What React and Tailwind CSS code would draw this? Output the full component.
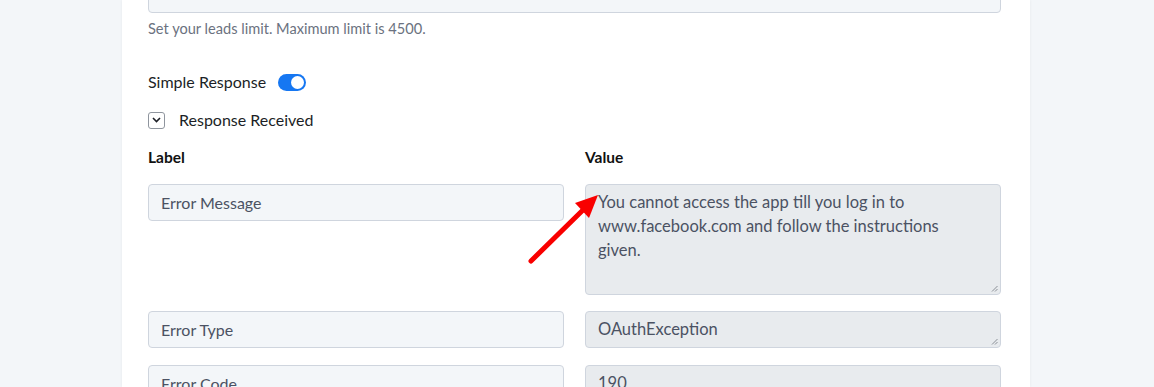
import React from "react";

const fieldCls =
  "h-[37px] w-full rounded-[4px] border border-[#cfd5de] bg-[#f3f6f9] px-[12px] text-[16px] text-[#4b5263] flex items-center";

const valueCls =
  "relative w-full rounded-[4px] border border-[#cfd5de] bg-[#e8ebee] pl-[12px] pr-[40px] text-[16.5px] leading-[24px] text-[#4b5263]";

const Grip = () => (
  <svg className="absolute right-[2px] bottom-[2px]" width="7" height="7" viewBox="0 0 7 7">
    <path d="M6.5 1 L1 6.5 M6.5 4 L4 6.5" stroke="#8a8f96" strokeWidth="1" />
  </svg>
);

const Row = ({ label, value, tall, top }) => (
  <div className="grid grid-cols-2 gap-[21px]" style={{ marginTop: top }}>
    <div className={fieldCls}>{label}</div>
    <div className={valueCls + (tall ? " h-[111px] pt-[5px]" : " h-[37px] pt-[5px]")}>
      {value}
      <Grip />
    </div>
  </div>
);

export default function App() {
  return (
    <div
      className="h-[387px] w-full overflow-hidden bg-[#f3f6f9]"
      style={{ fontFamily: "Lato, 'Open Sans', sans-serif" }}
    >
      <div className="relative ml-[122px] flow-root h-full w-[908px] bg-white pl-[26px] pr-[29px] shadow-[0_0_3px_rgba(0,0,0,0.06)]">
        <div className="-mt-[24px] h-[37px] w-full rounded-[4px] border border-[#cfd5de] bg-[#f3f6f9]" />
        <p className="mt-[8px] text-[14.6px] leading-[16px] text-[#6b7280]">
          Set your leads limit. Maximum limit is 4500.
        </p>

        <div className="mt-[35px] flex items-center gap-[12px]">
          <span className="text-[16px] leading-[20px] text-[#1c1f26]">Simple Response</span>
          <span className="flex h-[17px] w-[28px] items-center justify-end rounded-full bg-[#1677f2] pr-[2px]">
            <span className="h-[13px] w-[13px] rounded-full bg-white" />
          </span>
        </div>

        <div className="mt-[18px] flex items-center gap-[14px]">
          <span className="flex h-[17px] w-[17px] items-center justify-center rounded-[3px] border border-[#8f959e] bg-white">
            <svg width="9" height="6" viewBox="0 0 9 6">
              <path d="M1 1 L4.5 4.5 L8 1" fill="none" stroke="#1c1f26" strokeWidth="1.6" />
            </svg>
          </span>
          <span className="text-[16px] leading-[20px] text-[#1c1f26]">Response Received</span>
        </div>

        <div className="mt-[17px] grid grid-cols-2 gap-[21px] text-[15.5px] font-bold leading-[20px] text-[#111]">
          <span>Label</span>
          <span>Value</span>
        </div>

        <Row
          top="17px"
          label="Error Message"
          tall
          value="You cannot access the app till you log in to www.facebook.com and follow the instructions given."
        />
        <Row top="16px" label="Error Type" value="OAuthException" />
        <Row top="17px" label="Error Code" value="190" />

        <svg
          className="absolute left-[401px] top-[181px]"
          width="84"
          height="92"
          viewBox="0 0 84 92"
        >
          <line x1="8" y1="80" x2="61" y2="28" stroke="#f90000" strokeWidth="5" strokeLinecap="round" />
          <polygon points="75,14 52,22 66,37" fill="#f90000" />
        </svg>
      </div>
    </div>
  );
}
